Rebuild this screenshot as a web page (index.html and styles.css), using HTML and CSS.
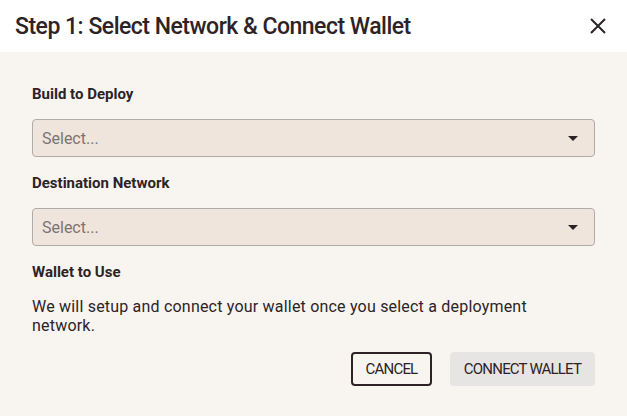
FILE: index.html
```html
<!DOCTYPE html>
<html>
<head>
<meta charset="utf-8">
<link rel="stylesheet" href="styles.css">
</head>
<body>
<div class="dialog">
  <div class="header">
    <h1 class="title">Step 1: Select Network &amp; Connect Wallet</h1>
    <button class="close" aria-label="Close">
      <svg width="18" height="18" viewBox="0 0 18 18"><path d="M2 2 L16 16 M16 2 L2 16" stroke="#2d2326" stroke-width="2" fill="none"/></svg>
    </button>
  </div>
  <div class="body">
    <div class="field">
      <label class="label">Build to Deploy</label>
      <div class="select"><span class="placeholder">Select...</span><span class="caret"></span></div>
    </div>
    <div class="field">
      <label class="label">Destination Network</label>
      <div class="select"><span class="placeholder">Select...</span><span class="caret"></span></div>
    </div>
    <div class="field">
      <label class="label">Wallet to Use</label>
      <p class="desc">We will setup and connect your wallet once you select a deployment network.</p>
    </div>
    <div class="actions">
      <button class="btn btn-outline">CANCEL</button>
      <button class="btn btn-disabled">CONNECT WALLET</button>
    </div>
  </div>
</div>
</body>
</html>
```
FILE: styles.css
```css
* { box-sizing: border-box; }
html, body { margin: 0; padding: 0; }
body {
  width: 627px;
  height: 416px;
  background: #f8f5f1;
  font-family: Roboto, "Noto Sans", sans-serif;
  color: #2d2326;
  overflow: hidden;
}
.dialog { display: flex; flex-direction: column; height: 416px; }
.header {
  height: 52px;
  background: #ffffff;
  display: flex;
  align-items: center;
  justify-content: space-between;
  padding: 0 20px 0 15px;
}
.title {
  margin: 0;
  font-size: 23px;
  font-weight: 500;
  letter-spacing: -0.5px;
}
.close {
  border: 0;
  background: transparent;
  padding: 0;
  width: 18px;
  height: 18px;
  display: flex;
}
.body {
  padding: 33px 32px 0 32px;
  display: flex;
  flex-direction: column;
}
.field { display: flex; flex-direction: column; }
.label {
  font-size: 15px;
  font-weight: 700;
  line-height: 18px;
  margin-bottom: 16px;
}
.select {
  height: 38px;
  border: 1px solid #b1aba7;
  border-radius: 4px;
  background: #efe5dd;
  display: flex;
  align-items: center;
  justify-content: space-between;
  padding: 0 16px 0 9px;
  margin-bottom: 17px;
}
.placeholder { font-size: 16px; color: #7b7474; }
.caret {
  width: 0; height: 0;
  border-left: 5.5px solid transparent;
  border-right: 5.5px solid transparent;
  border-top: 5px solid #2d2326;
}
.desc {
  margin: 0;
  font-size: 16px;
  line-height: 19px;
  letter-spacing: 0.2px;
  width: 520px;
}
.actions {
  display: flex;
  justify-content: flex-end;
  gap: 18px;
  margin-top: 17px;
}
.btn {
  height: 34px;
  font-family: Roboto, sans-serif;
  font-size: 15px;
  letter-spacing: -0.8px;
  border-radius: 4px;
  padding: 0;
  color: #2d2326;
  white-space: nowrap;
}
.btn-outline {
  background: transparent;
  border: 2px solid #2d2326;
  width: 81px;
}
.btn-disabled {
  background: #e7e5e3;
  border: 0;
  width: 145px;
}
```
